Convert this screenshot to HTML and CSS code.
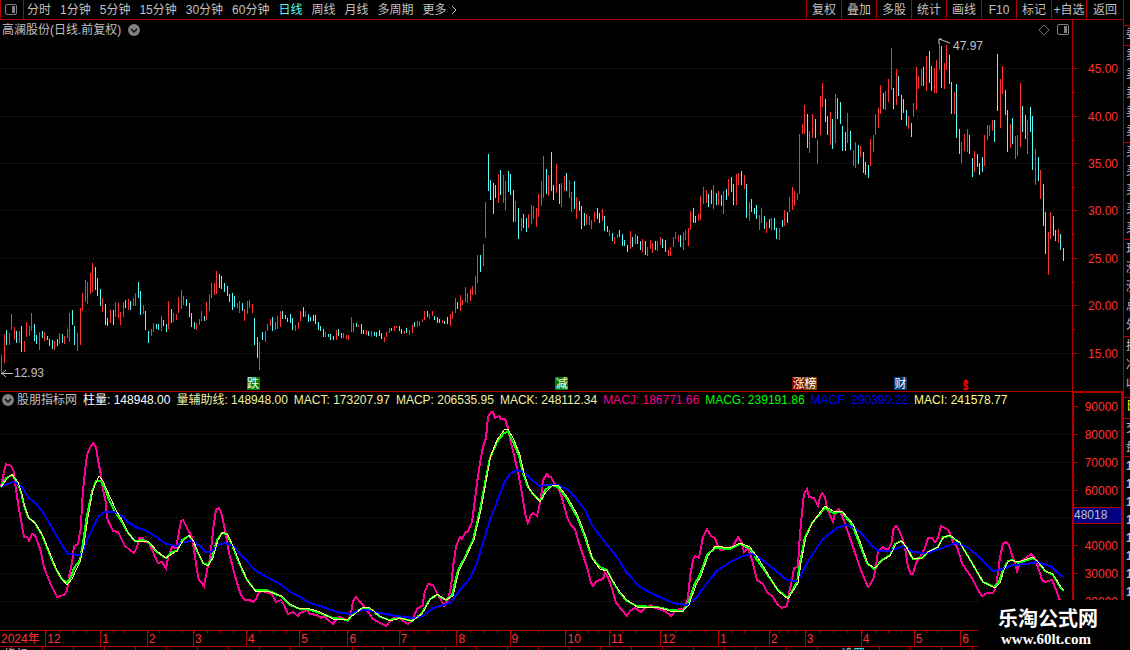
FILE: index.html
```html
<!DOCTYPE html>
<html lang="zh-CN">
<head>
  <meta charset="UTF-8">
  <meta name="viewport" content="width=device-width, initial-scale=1.0">
  <title>高澜股份 日线</title>
  <link rel="stylesheet" href="styles.css">
</head>
<body>
  <div class="app">
    <main class="main">
      <nav class="toolbar">
        <button type="button" class="tool-icon" aria-label="侧栏">
          <svg width="12" height="11" viewBox="0 0 12 11"><rect x="0.5" y="0.5" width="11" height="10" rx="1.5" fill="none" stroke="#808080"/><rect x="7" y="2" width="3" height="7" fill="#808080"/></svg>
        </button>
        <div class="periods">
          <button type="button">分时</button>
          <button type="button">1分钟</button>
          <button type="button">5分钟</button>
          <button type="button">15分钟</button>
          <button type="button">30分钟</button>
          <button type="button">60分钟</button>
          <button type="button" class="active">日线</button>
          <button type="button">周线</button>
          <button type="button">月线</button>
          <button type="button">多周期</button>
          <button type="button" class="more">更多<svg width="6" height="10" viewBox="0 0 6 10"><path d="M1 1L5 5L1 9" fill="none" stroke="#c0c0c0"/></svg></button>
        </div>
        <div class="actions">
          <button type="button">复权</button>
          <button type="button">叠加</button>
          <button type="button">多股</button>
          <button type="button">统计</button>
          <button type="button">画线</button>
          <button type="button">F10</button>
          <button type="button">标记</button>
          <button type="button">+自选</button>
          <button type="button" class="back">返回</button>
        </div>
      </nav>

      <!-- K线 -->
      <section class="panel price-panel">
        <div class="plot">
          <header class="price-head">
            <h1>高澜股份(日线.前复权)</h1>
            <svg width="12" height="12" viewBox="0 0 12 12"><circle cx="6" cy="6" r="6" fill="#808080"/><path d="M3 5L6 8L9 5" fill="none" stroke="#101010" stroke-width="1.5"/></svg>
            <span class="head-icons">
              <svg width="12" height="12" viewBox="0 0 12 12"><path d="M6 1L11 6L6 11L1 6Z" fill="none" stroke="#707070"/></svg>
              <svg width="12" height="11" viewBox="0 0 12 11"><rect x="0.5" y="0.5" width="11" height="10" rx="1.5" fill="none" stroke="#808080"/><rect x="7" y="2" width="3" height="7" fill="#808080"/></svg>
            </span>
          </header>
          <svg class="chart price-chart" viewBox="0 39 1072 352" preserveAspectRatio="none">
            <path class="grid" d="M1 68.5H1072M1 116.5H1072M1 163.5H1072M1 210.5H1072M1 258.5H1072M1 305.5H1072M1 353.5H1072"/>
            <path class="bars up" id="up"/>
            <path class="bars down" id="down"/>
          </svg>
          <span class="note low"><svg width="12" height="9" viewBox="0 0 12 9"><path d="M0 4.5H12M5 1L1 4.5L5 8" fill="none" stroke="#c0c0c0"/></svg>12.93</span>
          <span class="note high"><svg width="14" height="12" viewBox="0 0 14 12"><path d="M1 1L12 5M1 6V1H4" fill="none" stroke="#c0c0c0"/></svg>47.97</span>
          <span class="badge fall">跌</span>
          <span class="badge cut">减</span>
          <span class="badge rise">涨</span>
          <span class="badge rank">榜</span>
          <span class="badge finance">财</span>
          <span class="dollar"><svg width="6" height="3" viewBox="0 0 6 3"><path d="M3 0L6 3H0Z" fill="#ff0000"/></svg>$</span>
        </div>
        <div class="axis">
          <svg width="50" height="371" viewBox="0 20 50 371">
            <path class="ticks" d="M0 68.5H5M0 116.5H5M0 163.5H5M0 210.5H5M0 258.5H5M0 305.5H5M0 353.5H5M0 92.5H2M0 140.5H2M0 187.5H2M0 234.5H2M0 282.5H2M0 329.5H2"/>
            <g class="scale">
              <text x="45" y="73">45.00</text>
              <text x="45" y="121">40.00</text>
              <text x="45" y="168">35.00</text>
              <text x="45" y="215">30.00</text>
              <text x="45" y="263">25.00</text>
              <text x="45" y="310">20.00</text>
              <text x="45" y="358">15.00</text>
            </g>
          </svg>
        </div>
      </section>

      <!-- 指标 -->
      <section class="panel">
        <div class="plot indicator-plot">
          <header class="indicator-head">
            <svg width="12" height="12" viewBox="0 0 12 12"><circle cx="6" cy="6" r="6" fill="#808080"/><path d="M3 5L6 8L9 5" fill="none" stroke="#101010" stroke-width="1.5"/></svg>
            <span>股朋指标网</span>
            <span class="white">柱量: 148948.00</span>
            <span class="cream">量辅助线: 148948.00</span>
            <span class="cream">MACT: 173207.97</span>
            <span class="cream">MACP: 206535.95</span>
            <span class="cream">MACK: 248112.34</span>
            <span class="pink">MACJ: 186771.66</span>
            <span class="green">MACG: 239191.86</span>
            <span class="blue">MACF: 290390.22</span>
            <span class="yellow">MACI: 241578.77</span>
          </header>
          <svg class="chart indicator-chart" viewBox="0 409 1072 221" preserveAspectRatio="none">
            <path class="grid" d="M1 434.5H1072M1 462.5H1072M1 490.5H1072M1 517.5H1072M1 545.5H1072M1 573.5H1072M1 601.5H1072"/>
            <polyline class="line macj" id="macj"/>
            <polyline class="line macg" id="macg"/>
            <polyline class="line macf" id="macf"/>
            <polyline class="line maci" id="maci"/>
          </svg>
        </div>
        <div class="axis axis-boxed">
          <svg width="47" height="237" viewBox="0 393 47 237">
            <path class="ticks" d="M0 406.5H4M0 434.5H4M0 462.5H4M0 490.5H4M0 545.5H4M0 573.5H4M0 601.5H4M0 420.5H1M0 448.5H1M0 476.5H1M0 504.5H1M0 531.5H1M0 559.5H1M0 587.5H1"/>
            <g class="scale">
              <text x="44" y="411">90000</text>
              <text x="44" y="439">80000</text>
              <text x="44" y="467">70000</text>
              <text x="44" y="495">60000</text>
              <text x="44" y="550">40000</text>
              <text x="44" y="578">30000</text>
              <text x="44" y="606">20000</text>
            </g>
            <rect x="0" y="507" width="47" height="17" fill="#000080"/>
            <path class="ticks" d="M0 507.5H47M0 523.5H47"/>
            <text class="cursor-value" x="0" y="519">48018</text>
          </svg>
        </div>
      </section>

      <div class="time-axis" id="months"></div>
      <div class="next-row"><span>指标</span><span class="active next-set">设置</span></div>
    </main>

    <!-- 盘口 -->
    <aside class="quotes">
      <div class="q-top"></div>
      <div class="q-one">委</div>
      <div class="q-five"><span>卖</span><span>卖</span><span>卖</span><span>卖</span><span>卖</span></div>
      <div class="q-five"><span>买</span><span>买</span><span>买</span><span>买</span><span>买</span></div>
      <div class="q-five"><span>现</span><span>涨</span><span>涨</span><span>总</span><span>外</span></div>
      <div class="q-three"><span>换</span><span>净</span><span>收</span></div>
      <div class="q-tab">日</div>
      <div class="q-two"><span>交</span><span>盘</span></div>
      <div class="q-ticks"><span>1</span><span>1</span><span>1</span><span>1</span><span>1</span><span>1</span><span>1</span><span>1</span></div>
    </aside>

    <div class="site-mark">
      <strong>乐淘公式网</strong>
      <span>www.60lt.com</span>
    </div>
  </div>
  <script src="chart.js"></script>
</body>
</html>
```
FILE: styles.css
```css
* {
  box-sizing: border-box;
}
body {
  margin: 0;
  background: #000;
  color: #c0c0c0;
  font-family: "Liberation Sans", "Noto Sans CJK SC", sans-serif;
  font-size: 12px;
  line-height: 16px;
}
svg {
  display: block;
  flex: none;
}
button {
  border: none;
  padding: 0;
  background: none;
  color: inherit;
  font: inherit;
  white-space: nowrap;
  cursor: pointer;
}
.app {
  position: relative;
  display: flex;
  height: 100vh;
  overflow: hidden;
}
.main {
  flex: 1;
  min-width: 0;
  display: flex;
  flex-direction: column;
}
.active {
  color: #54fcfc;
}

/* toolbar */
.toolbar {
  flex: none;
  display: flex;
  height: 20px;
  border-bottom: 1px solid #b00000;
}
.tool-icon {
  width: 24px;
  padding: 0 0 1px 4px;
  border-left: 1px solid #b00000;
  border-right: 1px solid #b00000;
}
.periods {
  display: flex;
  gap: 9px;
  padding-left: 3px;
}
.more {
  display: flex;
  align-items: center;
  gap: 4px;
}
.actions {
  display: flex;
  margin-left: auto;
}
.actions button {
  width: 35px;
  border-left: 1px solid #b00000;
}
.actions .back {
  width: 37px;
}

/* panels */
.panel {
  flex: none;
  display: grid;
  grid-template-columns: 1fr 51px;
}
.plot {
  position: relative;
  min-width: 0;
}
.indicator-plot {
  border-top: 1px solid #b00000;
}
.price-head,
.indicator-head {
  display: flex;
  align-items: center;
  white-space: nowrap;
}
.price-head {
  gap: 7px;
  height: 19px;
  padding: 0 3px 0 2px;
}
.price-head h1 {
  margin: 0;
  font-size: 12px;
  font-weight: normal;
}
.head-icons {
  display: flex;
  align-items: center;
  gap: 7px;
  margin-left: auto;
}
.indicator-head {
  gap: 6px;
  height: 17px;
  padding: 0 0 2px 2px;
}
.indicator-head svg {
  margin-right: -3px;
}
.chart {
  width: 100%;
}
.price-chart {
  height: 352px;
}
.indicator-chart {
  height: 221px;
}
.grid {
  stroke: #b00000;
  stroke-dasharray: 1 3;
  shape-rendering: crispEdges;
}
.bars {
  shape-rendering: crispEdges;
}
.up {
  stroke: #ff3232;
}
.down {
  stroke: #54fcfc;
}
.line {
  fill: none;
  stroke-width: 2;
  shape-rendering: crispEdges;
  vector-effect: non-scaling-stroke;
}
.macj { stroke: #ff0096; }
.macg { stroke: #00ff00; }
.macf { stroke: #0000ff; }
.maci { stroke: #ffff80; stroke-width: 1; }

.white { color: #fff; }
.cream { color: #f0f0a0; }
.pink { color: #f00090; }
.green { color: #00ff00; }
.blue { color: #0000ff; }
.yellow { color: #ffff80; }

.axis {
  border-left: 1px solid #b00000;
}
.axis-boxed {
  border: 2px solid #b00000;
  border-bottom: none;
}
.ticks {
  stroke: #b00000;
  shape-rendering: crispEdges;
}
.scale {
  fill: #ff3232;
  text-anchor: end;
}
.cursor-value {
  fill: #c0c0c0;
}

/* marks over the candles */
.note,
.badge,
.dollar {
  position: absolute;
}
.note {
  display: flex;
  align-items: center;
  gap: 1px;
}
.low {
  left: 1px;
  bottom: 10px;
}
.high {
  left: 87.5%;
  top: 18px;
}
.high svg {
  margin-bottom: 4px;
}
.badge {
  bottom: 1px;
  width: 13px;
  height: 13px;
  color: #fff;
  line-height: 14px;
  text-align: center;
}
.fall { left: 23%; background: #008000; }
.cut { left: 51.8%; background: #008000; }
.rise { left: 73.9%; background: #800000; }
.rank { left: 75%; background: #804000; }
.finance { left: 83.4%; background: #003c78; }
.dollar {
  left: 89.8%;
  bottom: 0;
  display: flex;
  flex-direction: column;
  align-items: center;
  color: #ff0000;
  font-weight: bold;
  font-size: 10px;
  line-height: 9px;
}

/* months */
.time-axis {
  flex: none;
  display: flex;
  height: 17px;
  margin-right: 51px;
  border-top: 1px solid #b00000;
  border-bottom: 1px solid #b00000;
  color: #ff3232;
}
.month {
  min-width: 0;
  padding-left: 1px;
  border-left: 1px solid #b00000;
  background: linear-gradient(to right, #b00000 1px, transparent 1px) 0 0 / 25% 2px repeat-x;
  white-space: nowrap;
}
.month:first-child {
  border-left: none;
  background: none;
}
.next-row {
  flex: 1;
  display: flex;
  min-height: 0;
  overflow: hidden;
  padding-left: 4px;
  background: repeating-linear-gradient(to right, transparent 0 11px, #b00000 11px 12px, transparent 12px 31px);
}
.next-set {
  margin: 0 258px 0 auto;
}

/* quotes strip */
.quotes {
  flex: none;
  width: 7px;
  overflow: hidden;
  border-left: 1px solid #b00000;
}
.quotes div {
  border-bottom: 1px solid #b00000;
  padding-left: 2px;
  overflow: hidden;
}
.quotes span {
  display: block;
  line-height: 19px;
}
.q-top { height: 26px; }
.q-one { height: 20px; }
.q-five { height: 97px; }
.q-three { height: 61px; }
.q-tab { height: 21px; color: #ffff00; }
.q-two { height: 38px; }
.quotes .q-ticks { border: none; }
.quotes .q-ticks span {
  font-weight: bold;
  line-height: 18px;
}

.site-mark {
  position: absolute;
  right: 0;
  bottom: 0;
  width: 152px;
  height: 50px;
  padding: 7px 0 0 20px;
  background: #000;
  color: #fff;
}
.site-mark strong,
.site-mark span {
  display: block;
}
.site-mark strong {
  font-size: 20px;
  line-height: 24px;
}
.site-mark span {
  padding-left: 3px;
  font: bold 15px/16px "Liberation Serif", serif;
}
```
FILE: chart.js
```js
// x high low
const up = `1 355 373,4 334 363,9 333 345,11 314 330,14 327 340,19 331 343,24 341 352,26 322 337,29 326 336,31 313 331,
39 332 350,44 332 341,54 341 350,59 333 344,64 336 344,67 329 338,69 313 342,77 333 351,80 308 345,82 293 311,
85 280 302,87 282 304,90 273 294,92 263 292,102 298 312,110 310 323,115 302 317,118 303 318,120 312 325,123 302 317,
128 299 310,133 298 306,135 293 306,143 305 314,151 329 336,153 323 332,161 316 331,168 301 329,173 313 322,
176 314 320,178 297 313,181 290 309,183 296 305,196 323 330,199 319 325,201 311 321,206 302 320,209 294 311,
211 283 298,214 283 295,216 271 294,237 303 308,239 301 313,244 309 321,247 301 314,249 300 308,252 304 313,
259 342 370,265 331 342,267 324 331,270 319 326,275 322 330,277 316 329,280 311 327,295 325 331,298 322 329,
300 311 321,305 311 317,325 332 337,336 330 340,343 333 338,346 335 339,348 335 340,351 317 332,353 323 332,
358 325 327,366 330 335,371 331 337,384 337 342,386 332 337,389 328 333,394 326 331,396 326 328,404 331 334,
409 330 335,412 324 333,417 321 327,419 321 326,422 319 322,424 311 320,429 314 319,432 311 316,442 320 323,
450 314 326,452 311 319,455 298 313,460 295 311,462 300 305,465 287 302,467 293 303,470 289 301,472 286 295,
475 276 295,477 255 283,483 244 266,485 202 238,498 174 203,503 175 203,505 181 210,515 201 222,521 218 231,
528 214 228,531 205 224,533 206 219,536 208 227,538 194 217,541 181 206,543 156 198,548 175 196,556 164 193,
561 183 207,564 176 191,569 180 198,571 192 212,576 197 219,586 214 225,589 216 225,591 220 229,594 212 222,
602 209 221,609 230 236,614 237 244,617 234 238,630 231 249,635 234 244,642 239 252,647 247 256,650 240 249,
652 243 253,657 241 251,660 237 245,668 250 256,670 247 256,673 237 247,675 232 239,678 235 242,683 232 250,
685 230 240,688 228 246,690 211 230,698 214 221,700 196 220,703 187 204,706 190 203,713 185 209,718 191 205,
723 191 214,728 179 196,736 174 205,738 173 185,744 175 189,749 202 221,759 215 230,761 208 223,766 222 233,
771 218 230,779 228 240,784 210 226,789 197 212,792 187 210,794 191 206,797 193 200,799 134 194,802 124 134,
804 105 134,809 131 153,812 114 138,817 140 164,820 96 135,822 83 107,830 112 145,835 94 143,847 113 143,
853 150 166,855 142 168,860 146 157,870 139 166,873 135 152,875 114 135,878 108 128,880 85 114,885 91 110,
888 79 102,891 48 90,896 69 105,908 116 129,913 103 117,916 67 110,918 76 89,921 69 86,926 56 91,934 68 93,
936 60 93,939 43 70,944 63 89,946 45 70,954 92 114,961 142 163,964 134 151,967 129 152,974 151 172,984 135 166,
987 125 140,989 125 136,992 120 131,1000 79 128,1002 66 94,1010 124 148,1015 136 159,1017 135 156,1020 83 147,
1027 120 154,1035 149 185,1040 170 199,1048 232 275,1050 212 239,1058 229 243`;

const down = `6 330 345,16 331 343,21 326 352,34 324 341,36 335 344,42 331 338,47 336 340,49 339 346,52 340 349,
57 339 346,62 334 343,72 310 325,74 326 345,95 267 290,97 278 296,100 289 306,105 304 325,107 318 326,113 310 325,
125 300 308,130 301 310,138 282 298,140 291 315,145 311 330,148 331 343,156 324 329,158 324 330,163 320 326,
166 324 332,171 309 323,186 299 306,189 303 317,191 313 327,194 322 329,204 316 321,219 274 288,221 276 289,
224 283 292,227 286 296,229 294 302,232 293 310,234 296 307,242 303 311,254 318 345,257 337 358,262 332 340,
272 317 331,282 311 319,285 315 319,287 318 322,290 314 323,292 318 330,303 307 317,308 314 322,310 317 321,
313 315 321,315 315 324,318 322 330,320 326 331,323 329 337,328 334 337,330 334 340,333 336 340,338 329 336,
341 333 338,356 323 327,361 324 334,363 330 334,368 331 336,374 332 336,376 332 337,379 330 336,381 333 339,
391 328 331,399 326 331,401 329 334,406 328 333,414 322 327,427 311 317,434 316 320,437 317 323,439 319 323,
444 321 324,447 317 324,457 302 309,480 255 272,488 154 191,490 180 200,493 183 214,495 185 198,500 170 195,
508 171 192,510 174 195,513 190 222,518 208 239,523 214 228,526 218 232,546 169 194,551 152 191,553 185 200,
559 184 204,566 173 191,574 181 209,579 201 211,581 206 229,584 213 226,597 208 219,599 213 223,604 216 231,
607 226 232,612 233 241,619 230 237,622 234 246,624 240 246,627 245 252,632 237 247,637 236 244,640 241 250,
645 241 255,655 241 250,662 239 248,665 240 252,680 235 247,693 208 223,695 216 223,708 194 207,711 190 204,
716 193 205,721 195 206,726 189 200,731 177 192,733 184 205,741 171 185,746 184 218,751 199 212,754 208 214,
756 205 219,764 216 229,769 219 228,774 218 230,776 228 239,782 220 227,787 212 223,807 114 148,815 119 138,
825 99 122,827 116 135,832 119 149,837 98 119,840 102 124,842 126 151,845 132 151,850 131 150,858 145 164,
863 152 173,865 162 175,868 165 178,883 93 109,893 88 109,898 76 96,901 95 120,903 99 113,906 110 126,
911 123 137,923 67 86,929 51 83,931 66 91,941 46 88,949 55 84,951 82 114,956 84 138,959 129 154,969 135 154,
972 158 177,977 154 167,979 163 175,982 157 172,994 120 142,997 54 111,1005 90 115,1007 110 152,1012 118 144,
1022 106 132,1025 115 139,1030 107 132,1032 116 170,1038 157 181,1043 184 226,1045 212 254,1053 216 236,
1055 230 241,1060 234 250,1063 248 261`;

const lines = {
  macj: `1,487 4,472 6,464 11,466 14,472 16,490 20,515 24,537 27,537 29,541 32,534 35,535 38,543 41,552 44,567 47,575
51,585 57,597 64,595 67,591 69,577 72,563 74,546 78,544 81,527 82,503 84,480 87,455 90,448 93,443 96,447 98,460
101,475 103,490 106,503 107,518 113,531 118,532 125,546 130,550 134,553 137,547 139,538 143,538 145,542 149,543
153,552 158,563 162,562 166,568 168,558 172,547 176,548 179,532 181,521 183,520 188,530 192,537 194,550 197,570
199,580 202,583 204,586 207,570 210,560 212,540 214,523 216,510 219,508 221,512 224,525 227,540 229,553 233,568
237,583 241,595 245,600 250,600 253,602 256,599 259,592 263,591 272,594 276,602 281,600 284,605 288,614 293,612
298,616 300,613 307,610 310,614 317,615 321,618 324,616 328,620 333,624 337,618 340,617 348,621 351,613 353,601
356,597 360,602 363,605 368,612 373,619 380,623 386,626 392,619 398,617 403,621 408,624 412,621 417,609 423,605
424,594 428,584 433,585 437,593 441,600 444,606 448,600 451,587 453,567 456,547 460,537 462,539 465,533 468,531
472,522 474,507 477,483 480,463 483,447 486,438 488,417 491,412 493,412 495,418 499,416 501,419 505,419 508,428
511,443 514,455 517,468 520,482 523,500 526,518 528,523 531,515 533,513 537,516 539,508 541,497 543,480 547,474
549,477 551,477 554,483 558,487 562,498 567,517 571,525 575,529 578,540 583,555 587,567 591,583 593,586 597,581
603,579 605,573 607,575 612,588 616,603 622,610 627,616 630,611 635,608 641,612 645,608 651,605 655,608 665,611
671,616 676,610 685,608 688,597 690,577 693,560 695,556 699,558 703,537 707,529 711,536 715,538 718,547 721,550
728,549 733,546 738,537 742,543 744,552 748,548 752,560 757,580 763,584 767,592 773,597 777,604 782,608 787,606
789,593 792,580 794,568 798,567 799,547 801,523 803,503 804,494 807,489 809,497 814,498 818,506 820,497 822,493
825,497 827,508 830,515 833,522 835,513 839,509 843,518 849,535 855,553 862,573 868,587 873,580 875,572 878,552
883,547 886,550 889,548 892,542 893,530 896,526 899,530 903,540 906,553 908,567 911,574 913,574 916,563 920,557
925,548 928,538 932,538 935,542 938,538 941,526 945,528 949,531 953,542 957,547 962,563 967,571 972,578 978,590
982,596 987,593 993,593 996,587 998,573 1000,557 1003,544 1006,542 1009,545 1012,555 1015,563 1017,571 1020,562
1027,557 1031,554 1035,558 1038,567 1042,580 1045,582 1052,580 1055,587 1060,601`,
  macf: `1,487 7,484 14,482 22,487 28,497 35,503 42,511 48,521 55,533 62,545 68,554 80,555 83,552 87,540 93,528 98,517
104,512 115,512 122,516 128,522 137,528 145,530 155,536 166,544 172,545 176,546 183,542 193,541 200,546 206,552
211,552 218,545 225,543 233,546 243,557 255,570 267,577 280,584 292,593 300,597 310,603 323,607 337,612 350,614
357,611 367,610 380,613 397,616 413,618 423,616 433,608 450,603 460,590 470,578 477,563 483,543 490,520 497,502
504,483 510,474 517,470 523,472 530,478 539,486 547,485 558,485 567,489 575,497 585,510 592,525 600,536 608,546
617,557 627,573 640,587 653,594 673,603 687,605 697,597 707,583 717,571 730,562 743,556 752,554 760,558 770,566
787,580 797,581 800,577 810,558 823,539 837,528 845,525 855,528 863,535 873,547 879,551 890,551 903,546 913,552
927,553 940,549 955,543 967,547 977,555 993,571 1003,569 1012,565 1027,564 1037,562 1052,567 1060,575 1064,577`,
  macg: `1,487 6,478 12,475 17,482 21,492 24,505 28,517 35,523 42,535 48,550 55,567 61,578 67,583 71,577 74,568 80,560
83,543 87,515 92,492 96,481 101,481 105,488 109,500 115,512 122,522 128,533 135,541 143,540 148,542 158,553 166,558
172,552 177,551 182,540 189,536 193,541 198,553 203,563 208,565 212,558 217,540 222,533 227,534 233,547 240,565
247,580 255,590 267,590 282,597 290,605 300,609 307,609 320,613 333,618 348,620 355,612 363,608 370,609 380,617
390,620 400,618 412,621 422,613 430,599 437,595 446,600 452,595 458,570 465,557 473,540 480,510 485,483 490,458
497,442 504,433 508,432 513,442 519,456 523,473 528,487 533,494 539,500 542,499 545,490 552,485 558,487 567,499
577,517 585,537 592,558 600,567 607,570 613,582 620,593 627,601 637,606 657,607 670,610 683,611 688,603 695,583
700,575 707,555 715,548 730,549 740,544 750,549 757,560 767,574 778,590 788,598 797,582 800,563 805,537 812,523
825,508 833,513 842,512 852,525 860,545 867,563 874,569 882,560 890,555 895,544 901,541 907,548 913,559 922,558
928,552 938,547 943,537 950,536 960,543 972,563 983,582 994,587 999,582 1003,570 1008,561 1012,560 1018,563
1033,558 1038,562 1045,571 1053,575 1060,587 1064,591`,
  maci: `1,487 6,480 12,474 18,482 22,494 25,507 29,518 36,524 43,536 49,551 56,568 62,579 67,585 72,579 76,570 80,562
84,545 88,517 93,490 99,476 103,481 106,488 110,497 116,510 123,522 129,534 136,542 143,541 148,541 158,552 166,558
172,554 177,551 183,541 189,535 194,542 199,554 204,564 208,566 213,558 218,540 223,532 228,535 234,548 241,566
248,581 256,592 267,591 282,596 290,604 300,609 307,608 320,612 333,619 348,619 355,614 363,607 370,608 380,616
390,621 400,618 412,621 422,614 430,600 437,594 446,600 453,596 459,571 466,557 474,540 481,510 486,482 491,455
497,440 504,430 508,429 514,440 520,455 524,473 529,488 534,495 540,502 546,492 552,486 558,485 568,498 578,516
586,537 593,560 600,569 607,571 613,581 620,592 627,600 637,607 657,607 670,611 683,611 689,605 696,585 701,576
708,556 715,546 730,548 740,543 750,547 758,558 768,574 778,591 788,599 798,583 801,563 806,537 813,522 825,506
833,511 842,511 853,524 861,544 868,564 875,568 883,560 890,556 896,544 902,541 908,550 913,559 922,558 928,552
938,547 944,537 950,535 960,543 972,563 983,582 995,588 1000,583 1004,570 1008,562 1012,560 1018,562 1033,557
1039,563 1046,571 1053,574 1061,587 1064,590`
};

// label, share of the axis
const months = [
  ['2024年', 46], ['12', 55], ['1', 46], ['2', 46], ['3', 53], ['4', 53], ['5', 48], ['6', 51], ['7', 58], ['8', 53],
  ['9', 56], ['10', 43], ['11', 51], ['12', 58], ['1', 51], ['2', 35], ['3', 56], ['4', 53], ['5', 46], ['6', 114]
];

function barPath(text) {
  return text.split(',').map((bar) => {
    const [x, high, low] = bar.trim().split(' ').map(Number);
    return `M${x + 0.5} ${high}V${low}`;
  }).join('');
}

document.getElementById('up').setAttribute('d', barPath(up));
document.getElementById('down').setAttribute('d', barPath(down));

for (const id in lines) {
  document.getElementById(id).setAttribute('points', lines[id]);
}

months.forEach(([label, share]) => {
  const cell = document.createElement('span');
  cell.className = 'month';
  cell.style.flex = `${share} 1 0px`;
  cell.textContent = label;
  document.getElementById('months').appendChild(cell);
});
```
